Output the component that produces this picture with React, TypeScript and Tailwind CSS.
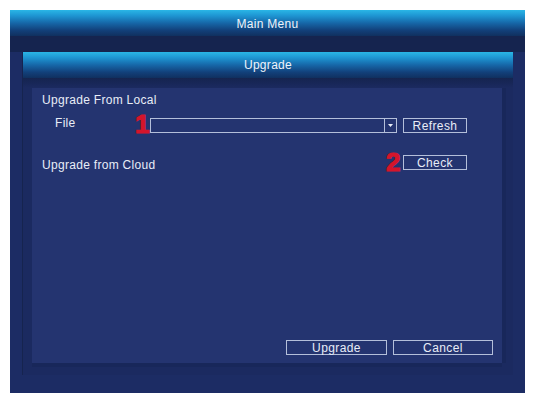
const titleBar =
  'shrink-0 flex items-center justify-center text-[12px] tracking-[0.3px] text-[#eef3fb] bg-[linear-gradient(to_bottom,#2ab6e6_0%,#1e95d2_22%,#1667a8_50%,#12407a_78%,#10305f_100%)]';

const boxBtn =
  'h-[15px] shrink-0 flex items-center justify-center border border-[#b4bfda] text-[12px] tracking-[0.4px] text-[#e8edf7] leading-none';

const marker =
  'absolute text-[26px] font-bold leading-[30px] text-[#d4152b] tracking-normal [-webkit-text-stroke:1.2px_#d4152b]';

export default function App() {
  return (
    <div className="w-[533px] h-[401px] bg-white pl-[10px] pt-[10px] font-['Liberation_Sans',Arial,sans-serif]">
      <div className="w-[515px] h-[383px] bg-[#1c2c64] flex flex-col">
        {/* Main menu title */}
        <div className={`${titleBar} h-[26px] pt-[1px]`}>Main Menu</div>
        <div className="h-[16px] shrink-0 bg-[#15244f]" />

        {/* Upgrade panel */}
        <div className="mx-[12px] h-[323px] shrink-0 flex flex-col bg-[#1b2a60] border-l border-[#16244f]">
          <div className={`${titleBar} h-[26px]`}>Upgrade</div>
          <div className="flex-1 pt-[10px] pl-[9px] pr-[11px] pb-[12px] bg-[linear-gradient(to_bottom,#15244f_0px,#1b2a60_10px)]">
            <div className="h-full bg-[#243470] shadow-[0_4px_0_#18275a,4px_0_0_#18275a] flex flex-col pl-[10px] pt-[5px] text-[12px] tracking-[0.3px] text-[#e8edf7]">
              <div className="h-[14px] leading-[14px]">Upgrade From Local</div>

              {/* File row */}
              <div className="relative mt-[11px] h-[15px] flex items-start">
                <div className="ml-[13px] w-[95px] -mt-[2px] leading-[14px]">File</div>
                <span className={`${marker} left-[93px] -top-[9px]`}>1</span>
                <div className="w-[247px] h-[15px] border border-[#b4bfda] flex justify-end">
                  <div className="w-[12px] h-full border-l border-[#b4bfda] flex items-center justify-center">
                    <svg width="5" height="3" viewBox="0 0 5 3">
                      <path d="M0 0h5L2.5 3z" fill="#e8edf7" />
                    </svg>
                  </div>
                </div>
                <div className={`${boxBtn} ml-[6px] w-[64px]`}>Refresh</div>
              </div>

              {/* Cloud row */}
              <div className="relative mt-[22px] h-[15px] flex items-start">
                <div className="mt-[3px] leading-[14px]">Upgrade from Cloud</div>
                <span className={`${marker} left-[344px] -top-[8px]`}>2</span>
                <div className={`${boxBtn} ml-auto mr-[35px] w-[64px]`}>Check</div>
              </div>

              {/* Bottom buttons */}
              <div className="mt-auto mb-[8px] flex justify-end gap-[6px] pr-[9px]">
                <div className={`${boxBtn} w-[101px]`}>Upgrade</div>
                <div className={`${boxBtn} w-[100px]`}>Cancel</div>
              </div>
            </div>
          </div>
        </div>
      </div>
    </div>
  );
}
